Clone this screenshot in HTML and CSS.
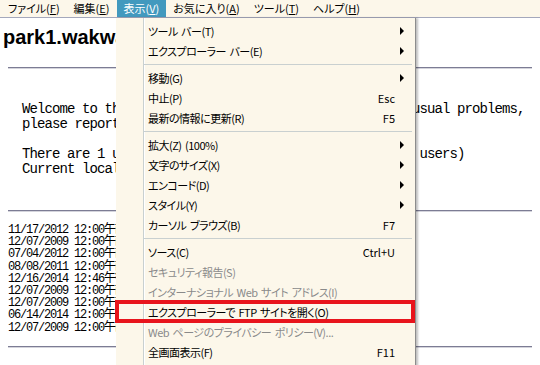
FILE: index.html
```html
<html>

<head>
<meta charset="UTF-8">
<title>park1.wakwak.com</title>

<link rel="stylesheet" href="styles.css">

</head>

<body>

<!-- menu bar -->
<div class="menubar">
    <div class="menubar-item">ファイル(<u>F</u>)</div>
    <div class="menubar-item">編集(<u>E</u>)</div>
    <div class="menubar-item active">表示(<u>V</u>)</div>
    <div class="menubar-item">お気に入り(<u>A</u>)</div>
    <div class="menubar-item">ツール(<u>T</u>)</div>
    <div class="menubar-item">ヘルプ(<u>H</u>)</div>
</div>

<!-- page -->
<div class="page">
    <h1 class="title">park1.wakwak.com</h1>
    <div class="rule"></div>
<pre class="welcome">Welcome to the park1.wakwak.com FTP server.   Any unusual problems,
please report them to ftpadmin@wakwak.com.

There are 1 users in your class (the maximum is 2000 users)
Current local time is Wed Dec 17 10:20:01 2014
</pre>
    <div class="rule rule-mid"></div>
<pre class="listing">11/17/2012 12:00午前  bin
12/07/2009 12:00午前  etc
07/04/2012 12:00午前  lib
08/08/2011 12:00午前  pub
12/16/2014 12:46午後  tmp
12/07/2009 12:00午前  usr
12/07/2009 12:00午前  var
06/14/2014 12:00午前  www
12/07/2009 12:00午前  msg
</pre>
    <div class="rule rule-bottom"></div>
</div>

<!-- 表示 menu -->
<div class="dropdown">
    <div class="item">ツール バー(T)<span class="arrow"></span></div>
    <div class="item">エクスプローラー バー(E)<span class="arrow"></span></div>
    <div class="sep"></div>
    <div class="item">移動(G)<span class="arrow"></span></div>
    <div class="item">中止(P)<span class="shortcut">Esc</span></div>
    <div class="item">最新の情報に更新(R)<span class="shortcut">F5</span></div>
    <div class="sep"></div>
    <div class="item">拡大(Z) (100%)<span class="arrow"></span></div>
    <div class="item">文字のサイズ(X)<span class="arrow"></span></div>
    <div class="item">エンコード(D)<span class="arrow"></span></div>
    <div class="item">スタイル(Y)<span class="arrow"></span></div>
    <div class="item">カーソル ブラウズ(B)<span class="shortcut">F7</span></div>
    <div class="sep"></div>
    <div class="item">ソース(C)<span class="shortcut">Ctrl+U</span></div>
    <div class="item disabled">セキュリティ報告(S)</div>
    <div class="item disabled">インターナショナル Web サイト アドレス(I)</div>
    <div class="item marked">エクスプローラーで FTP サイトを開く(O)</div>
    <div class="item disabled">Web ページのプライバシー ポリシー(V)...</div>
    <div class="item">全画面表示(F)<span class="shortcut">F11</span></div>
</div>

</body>
</html>
```

FILE: styles.css
```css
body {
    margin: 0;
    height: 365px;
    overflow: hidden;
    position: relative;
    background: #fff;
    color: #000;
    font-family: "Noto Sans CJK JP", sans-serif;
}

/* menu bar */

.menubar {
    display: flex;
    height: 17px;
    padding-left: 1px;
    border-bottom: 1px solid #a4a8bc;
    background: #fcf7ea;
    font-size: 11px;
    line-height: 17px;
    font-feature-settings: "palt";
}

.menubar-item {
    padding: 0 7px;
}

.menubar-item.active {
    background: #4299be;
    color: #fff;
}

/* page */

.page {
    padding: 0 8px;
}

.title {
    margin: 8px 0 0 -5px;
    font-family: "Liberation Sans", Arial, sans-serif;
    font-size: 20px;
    line-height: 23px;
    font-weight: bold;
    white-space: nowrap;
}

.rule {
    margin-top: 18px;
    border-top: 1px solid #7c7c94;
    border-bottom: 1px solid #d4d4dc;
}

.rule-mid {
    margin-top: 33px;
}

.rule-bottom {
    margin-top: 12px;
}

.welcome {
    margin: 33px 0 0 14px;
    font-family: "Liberation Mono", "Noto Sans CJK JP", monospace;
    font-size: 14px;
    letter-spacing: -0.9px;
    line-height: 15px;
}

.listing {
    margin: 12px 0 0 0;
    font-family: "Liberation Mono", "Noto Sans CJK JP", monospace;
    font-size: 12px;
    letter-spacing: -1.2px;
    line-height: 12.2px;
}

/* dropdown */

.dropdown {
    position: absolute;
    top: 18px;
    left: 116px;
    width: 299px;
    height: 350px;
    padding-top: 3px;
    border-right: 1px solid #8c8c8c;
    box-shadow: 2px 0 2px rgba(0, 0, 0, 0.25);
    background:
        linear-gradient(to right, transparent 27px, #c9d0d0 27px, #c9d0d0 28px, #fff 28px, #fff 29px, transparent 29px),
        #fcf7ea;
    font-size: 11px;
    letter-spacing: -0.5px;
    word-spacing: 1.5px;
    font-feature-settings: "palt";
}

.item {
    position: relative;
    display: flex;
    align-items: center;
    height: 20px;
    padding: 0 20px 0 32px;
    white-space: nowrap;
}

.item.disabled {
    color: #8a8a8a;
}

.shortcut {
    margin-left: auto;
    letter-spacing: 0;
}

.arrow {
    margin-left: auto;
    margin-right: -9px;
    width: 0;
    height: 0;
    border-left: 4px solid #000;
    border-top: 4px solid transparent;
    border-bottom: 4px solid transparent;
}

.item.marked::after {
    content: "";
    position: absolute;
    left: -1px;
    right: 0;
    top: -2px;
    bottom: -1px;
    border: 4px solid #e8141c;
}

.sep {
    height: 1px;
    margin: 3px 3px 3px 28px;
    background: #c9d0d0;
}
```
